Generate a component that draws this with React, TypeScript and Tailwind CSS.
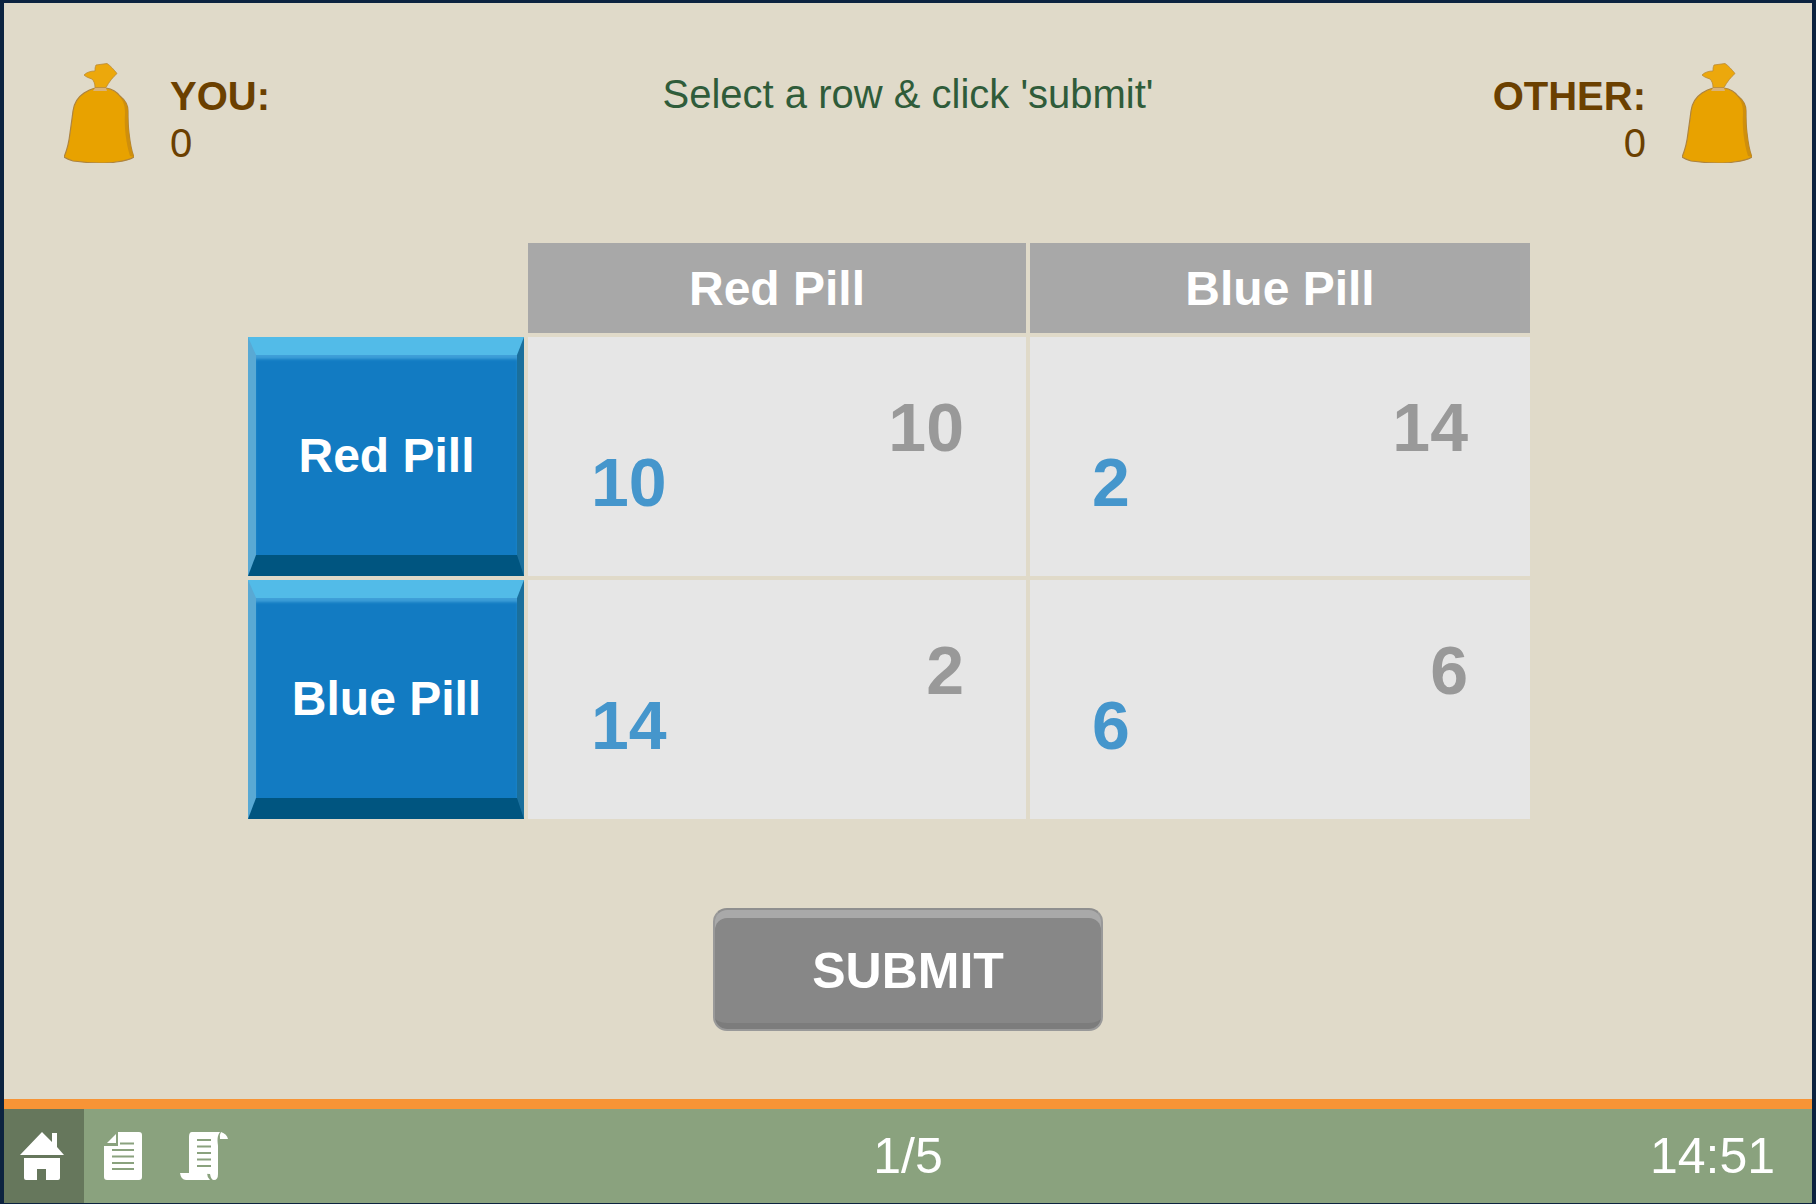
const Bag = () => (
  <svg width="70" height="100" viewBox="0 0 70 100" className="shrink-0 blur-[0.4px]">
    <path d="M31 25 L42 25 C48 26 53 29 56 33 C61 37 64 42 64 48 C64 56 64 63 65 70 C66 79 67 87 70 94 C66 97 60 98 52 99 C46 100 41 100 36 100 C27 100 17 99 9 98 C6 97 3 96 0 94 C3 87 5 79 6 70 C7 63 8 56 9 48 C10 40 14 34 20 30 C23 28 27 26 31 25 Z" fill="#e8a200" stroke="#ad8440" strokeWidth="1.200" />
    <path d="M55 33 C60 38 61 44 61 50 C60 64 62 80 66 93 L70 94 C67 87 66 79 65 70 C64 63 64 56 64 48 C64 42 61 37 55 33 Z" fill="#cf8f0c" />
    <path d="M31 25 L42 25 L43 28 L29 28 Z" fill="#d9b27a" />
    <path d="M31 24.500 C31 21 30 18 28 16 C25 15 22 14 20 12 C23 9 27 8 31 8 C31 6 31 4 32 2 L43 0.500 C47 3 50 7 53 10.500 C49 14 45 19 42 24.500 Z" fill="#eca80c" stroke="#b98a3a" strokeWidth="0.800" />
  </svg>
);

const HomeIcon = () => (
  <svg width="44" height="48" viewBox="0 0 44 48" fill="#fff">
    <path d="M22 0 L32 10 L32 1 L37 1 L37 15 L44 23 L0 23 Z" />
    <path d="M4 26 L40 26 L40 46 Q40 48 38 48 L26 48 L26 37 L17 37 L17 48 L6 48 Q4 48 4 46 Z" />
  </svg>
);

const DocIcon = () => (
  <svg width="38" height="48" viewBox="0 0 38 48">
    <path d="M14 0 L35 0 Q38 0 38 3 L38 45 Q38 48 35 48 L3 48 Q0 48 0 45 L0 14 L14 14 Z" fill="#fff" />
    <path d="M3 11 L12 2 L12 11 Z" fill="#fff" />
    <path d="M16 11.500 H30 M8 18 H30 M8 24.500 H30 M8 31 H30 M8 37 H30" stroke="#8aa27e" strokeWidth="2" />
  </svg>
);

const ScrollIcon = () => (
  <svg width="48" height="48" viewBox="0 0 48 48">
    <path d="M12 0 L40 0 C36 5 38 12 38 14 L38 42 Q38 48 34 48 Q31 48 30 42 L9 41 L9 5 Q9 0 12 0 Z" fill="#fff" />
    <path d="M41 0 Q47 2 48 7 L40 7 Q39 3 41 0 Z" fill="#fff" />
    <path d="M0 41 L27 41 Q27 45 30 48 L6 48 Q1 48 0 41 Z" fill="#fff" />
    <path d="M17 8 H31 M17 14.500 H31 M17 21 H31 M17 27.500 H31 M17 34 H31" stroke="#8aa27e" strokeWidth="2" />
  </svg>
);

const RowButton = ({ label }: { label: string }) => (
  <button className="flex items-center justify-center border-solid border-t-[18px] border-l-[8px] border-r-[7px] border-b-[21px] border-t-[#52bbe8] border-l-[#59a9d4] border-r-[#1a6f9c] border-b-[#005580] bg-[#127bc2] pt-[2px] text-[48px] font-bold text-white shadow-[inset_0_5px_3px_-1px_#3f9fd8]">
    {label}
  </button>
);

const HeaderCell = ({ label }: { label: string }) => (
  <div className="flex items-center justify-center bg-[#a8a8a8] pt-[2px] text-[48px] font-bold text-white">{label}</div>
);

const Cell = ({ mine, other, pl }: { mine: string; other: string; pl: string }) => (
  <div className={`flex flex-col bg-[#e6e6e6] pt-[50px] pr-[62px] text-[68px] font-bold ${pl}`}>
    <div className="self-end text-[#999999] leading-[80px]">{other}</div>
    <div className="-mt-[25px] self-start text-[#4596cc] leading-[80px]">{mine}</div>
  </div>
);

export default function App() {
  return (
    <div className="h-[1204px] w-[1816px] overflow-hidden bg-[#0c2340] pt-[3px] pr-[4px] pb-[1px] pl-[4px] font-['Liberation_Sans',Arial,sans-serif]">
      <div className="flex h-full flex-col bg-[#e0dac9]">
        <header className="grid h-[240px] grid-cols-[1fr_auto_1fr] items-start px-[60px] pt-[60px]">
          <div className="flex items-start gap-[36px]">
            <Bag />
            <div className="pt-[10px] text-[40px] leading-[47px] text-[#6b4000]">
              <div className="font-bold">YOU:</div>
              <div>0</div>
            </div>
          </div>
          <div className="pt-[8px] text-[40px] leading-[47px] text-[#2f5c3a]">Select a row &amp; click 'submit'</div>
          <div className="flex items-start justify-end gap-[36px]">
            <div className="pt-[10px] text-right text-[40px] leading-[47px] text-[#6b4000]">
              <div className="font-bold">OTHER:</div>
              <div>0</div>
            </div>
            <Bag />
          </div>
        </header>

        <section className="ml-[244px] grid w-[1282px] grid-cols-[276px_498px_500px] grid-rows-[90px_239px_239px] gap-[4px]">
          <div />
          <HeaderCell label="Red Pill" />
          <HeaderCell label="Blue Pill" />
          <RowButton label="Red Pill" />
          <Cell mine="10" other="10" pl="pl-[63px]" />
          <Cell mine="2" other="14" pl="pl-[62px]" />
          <RowButton label="Blue Pill" />
          <Cell mine="14" other="2" pl="pl-[63px]" />
          <Cell mine="6" other="6" pl="pl-[62px]" />
        </section>

        <div className="flex justify-center pt-[89px]">
          <button className="h-[123px] w-[390px] rounded-[14px] border-2 border-[#999999] border-t-[#8f8f8f] bg-[#a9a9a9] pt-[8px]">
            <div className="flex h-full items-center justify-center rounded-[12px] border-b-[6px] border-[#7c7c7c] bg-[#878787] pt-[1px] text-[50px] font-bold text-white">
              SUBMIT
            </div>
          </button>
        </div>

        <div className="mt-auto h-[10px] bg-[#f79436]" />
        <footer className="relative flex h-[94px] items-center bg-[#8aa27e] text-[50px] text-white">
          <div className="flex h-full w-[80px] items-center justify-start bg-[#66775c] pl-[16px]">
            <HomeIcon />
          </div>
          <div className="ml-[20px]"><DocIcon /></div>
          <div className="ml-[38px]"><ScrollIcon /></div>
          <div className="absolute inset-x-0 text-center">1/5</div>
          <div className="ml-auto pr-[37px]">14:51</div>
        </footer>
      </div>
    </div>
  );
}
